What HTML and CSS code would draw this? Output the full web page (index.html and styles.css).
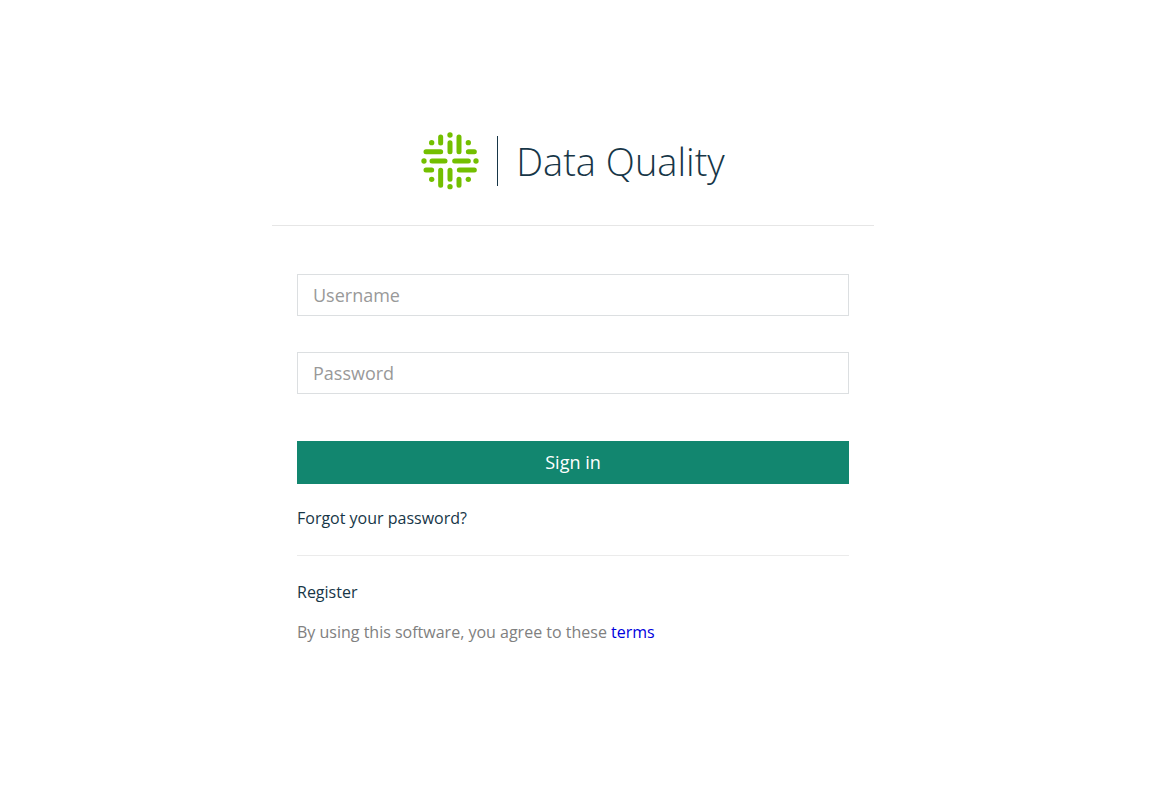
FILE: index.html
```html
<!DOCTYPE html>
<html lang="en">
<head>
<meta charset="utf-8">
<meta name="viewport" content="width=device-width, initial-scale=1">
<title>Data Quality</title>
<link rel="stylesheet" href="styles.css">
</head>
<body>
<main class="login">
  <header class="brand">
    <svg class="brand-logo" viewBox="18 18 174 174" aria-hidden="true">
      <path class="logo-bars" d="M77 33V51M105 50V77M132 33V77M33 77H77M160 77H178M51 105H90M119 105H160M33 132H50M133 132H178M77 133V178M105 133V160M132 160V178"/>
      <g class="logo-dots">
        <circle cx="105" cy="27" r="8"/><circle cx="50" cy="50" r="8"/><circle cx="160" cy="50" r="8"/>
        <circle cx="27" cy="105" r="8"/><circle cx="183" cy="105" r="8"/>
        <circle cx="50" cy="160" r="8"/><circle cx="160" cy="160" r="8"/><circle cx="105" cy="182" r="8"/>
      </g>
    </svg>
    <h1 class="brand-name">Data Quality</h1>
  </header>
  <form class="form">
    <input class="field" type="text" placeholder="Username" aria-label="Username">
    <input class="field" type="password" placeholder="Password" aria-label="Password">
    <button class="submit" type="submit">Sign in</button>
    <a class="link" href="#forgot">Forgot your password?</a>
    <hr class="rule">
    <a class="link" href="#register">Register</a>
    <p class="notice">By using this software, you agree to these <a class="terms" href="#terms">terms</a></p>
  </form>
</main>
</body>
</html>
```
FILE: styles.css
```css
* {
  box-sizing: border-box;
}

body {
  margin: 0;
  padding: 96px 21px 0 0;
  background: #fff;
  color: #173647;
  font: 16px/24px "Open Sans", sans-serif;
}

.login {
  max-width: 602px;
  margin: 0 auto;
}

.brand {
  display: flex;
  align-items: center;
  justify-content: center;
  padding: 36px 0 35px;
  border-bottom: 1px solid #e6e6e6;
}

.brand-logo {
  width: 58px;
  height: 58px;
}

.logo-bars {
  fill: none;
  stroke: #73bf00;
  stroke-width: 15;
  stroke-linecap: round;
}

.logo-dots {
  fill: #73bf00;
}

.brand-name {
  margin: 0 0 0 18px;
  padding-left: 18px;
  border-left: 1px solid #173647;
  font-size: 38px;
  font-weight: 300;
  line-height: 50px;
}

.form {
  display: flex;
  flex-direction: column;
  align-items: flex-start;
  padding: 48px 25px;
}

.field {
  width: 100%;
  height: 42px;
  margin: 0 0 36px;
  padding: 0 15px;
  border: 1px solid #dcdfe1;
  border-radius: 0;
  background: #fff;
  color: #173647;
  font: inherit;
  font-size: 18px;
}

.field::placeholder {
  color: #999;
  opacity: 1;
}

.submit {
  width: 100%;
  height: 43px;
  margin: 11px 0 22px;
  padding: 0 0 2px;
  border: 0;
  background: #12866f;
  color: #fff;
  font: inherit;
  font-size: 18px;
}

.link {
  color: #173647;
  text-decoration: none;
}

.rule {
  width: 100%;
  margin: 25px 0 24px;
  border: 0;
  border-top: 1px solid #ebebeb;
}

.notice {
  margin: 16px 0 0;
  color: #808080;
}

.terms {
  color: #00d;
  text-decoration: none;
}
```
